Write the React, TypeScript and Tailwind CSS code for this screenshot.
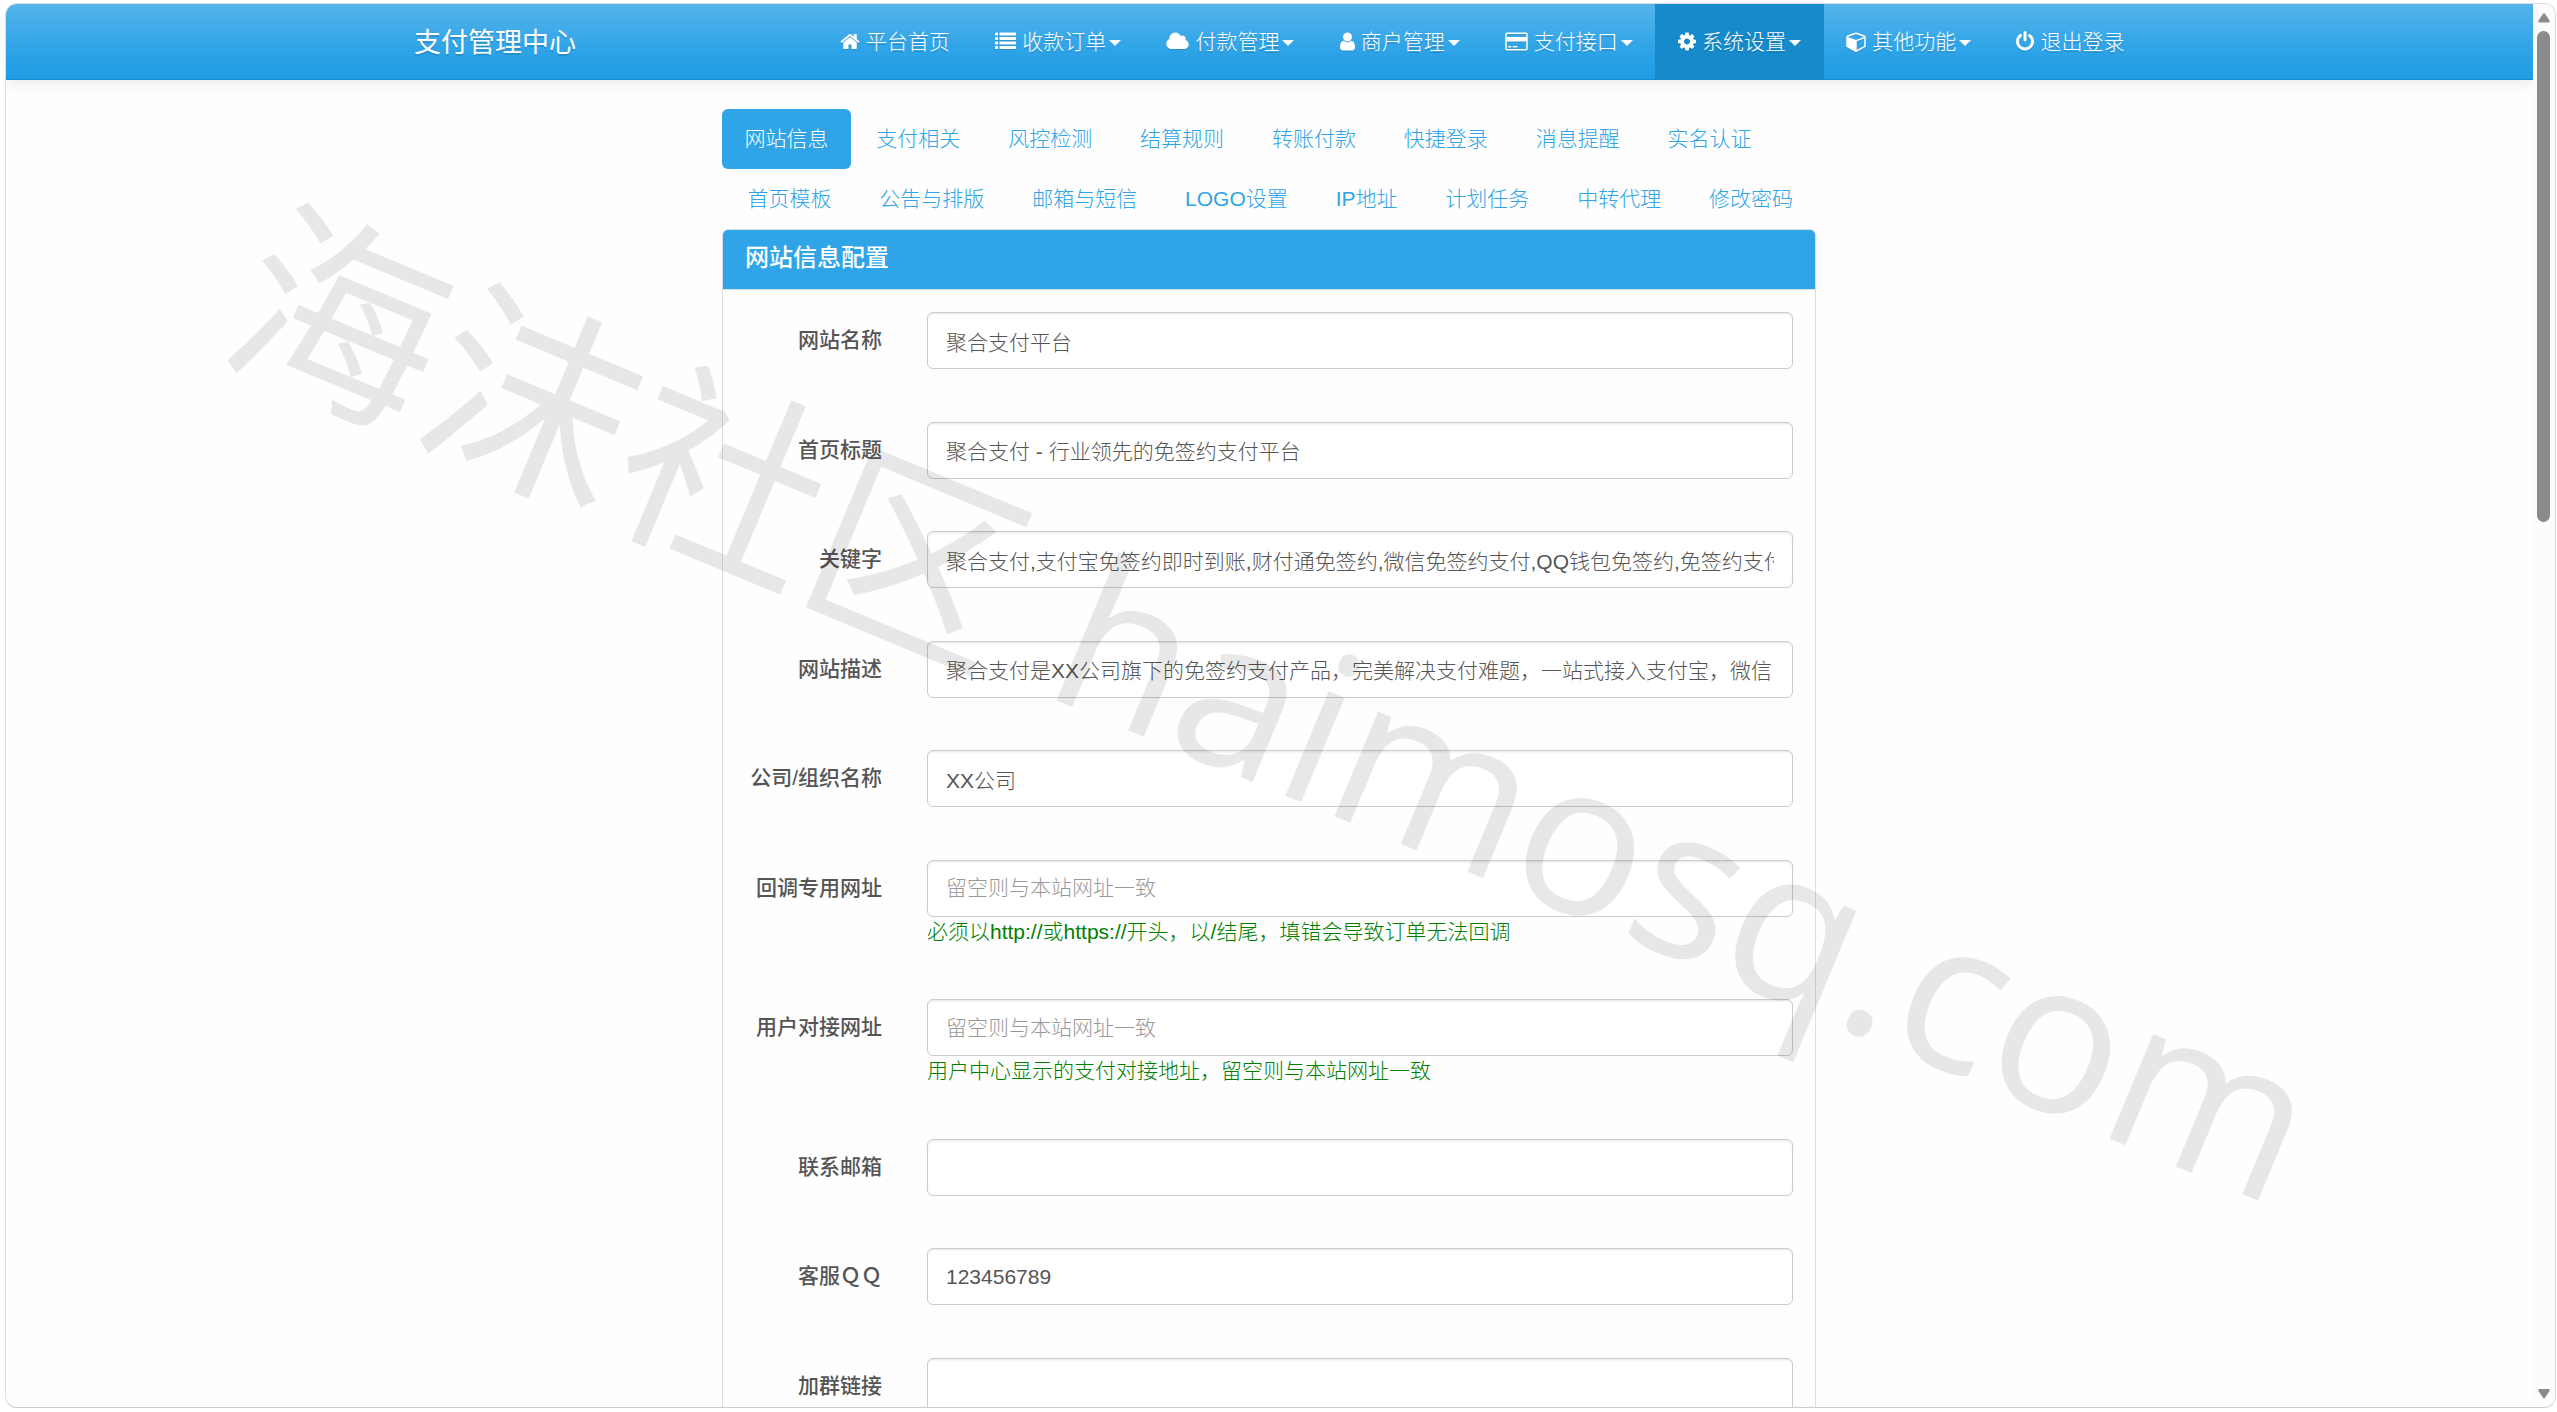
import React from 'react';

interface IconShape {
  viewBox: string;
  width: number;
  path: string;
}

interface NavItem {
  label: string;
  icon: IconShape;
  dropdown?: boolean;
  active?: boolean;
}

interface Field {
  label: string;
  value?: string;
  placeholder?: string;
  hint?: string;
}

const icons: { [key: string]: IconShape } = {
  home: {
    viewBox: '64 0 1664 1792',
    width: 20,
    path: 'M1472 992v480q0 26-19 45t-45 19h-384v-384h-256v384h-384q-26 0-45-19t-19-45v-480q0-1 .5-3t.5-3l575-474 575 474q1 2 1 6zm223-69l-62 74q-8 9-21 11h-3q-13 0-21-7l-692-577-692 577q-12 8-24 7-13-2-21-11l-62-74q-8-10-7-23.5t11-21.5l719-599q32-26 76-26t76 26l244 204v-195q0-14 9-23t23-9h192q14 0 23 9t9 23v408l219 182q10 8 11 21.5t-7 23.5z',
  },
  list: {
    viewBox: '0 0 1792 1792',
    width: 21,
    path: 'M0 1312q0-32 32-32h192q32 0 32 32v192q0 32-32 32h-192q-32 0-32-32zM0 928q0-32 32-32h192q32 0 32 32v192q0 32-32 32h-192q-32 0-32-32zM0 544q0-32 32-32h192q32 0 32 32v192q0 32-32 32h-192q-32 0-32-32zM0 160q0-32 32-32h192q32 0 32 32v192q0 32-32 32h-192q-32 0-32-32zM384 1312q0-32 32-32h1344q32 0 32 32v192q0 32-32 32h-1344q-32 0-32-32zM384 928q0-32 32-32h1344q32 0 32 32v192q0 32-32 32h-1344q-32 0-32-32zM384 544q0-32 32-32h1344q32 0 32 32v192q0 32-32 32h-1344q-32 0-32-32zM384 160q0-32 32-32h1344q32 0 32 32v192q0 32-32 32h-1344q-32 0-32-32z',
  },
  cloud: {
    viewBox: '64 0 1920 1792',
    width: 23,
    path: 'M1984 1152q0 159-112.5 271.5t-271.5 112.5h-1088q-185 0-316.5-131.5t-131.5-316.5q0-132 71-241.5t187-163.5q-2-28-2-43 0-212 150-362t362-150q158 0 286.5 88t187.5 230q70-62 166-62 106 0 181 75t75 181q0 75-41 138 129 30 213 134.5t84 239.5z',
  },
  user: {
    viewBox: '256 0 1280 1792',
    width: 15,
    path: 'M1536 1399q0 109-62.5 187t-150.5 78h-854q-88 0-150.5-78t-62.5-187q0-85 8.5-160.5t31.5-152 58.5-131 94-89 134.5-34.5q131 128 313 128t313-128q76 0 134.5 34.5t94 89 58.5 131 31.5 152 8.5 160.5zm-256-887q0 159-112.5 271.5t-271.5 112.5-271.5-112.5-112.5-271.5 112.5-271.5 271.5-112.5 271.5 112.5 112.5 271.5z',
  },
  card: {
    viewBox: '0 0 1920 1792',
    width: 23,
    path: 'M1760 128q66 0 113 47t47 113v1216q0 66-47 113t-113 47h-1600q-66 0-113-47t-47-113v-1216q0-66 47-113t113-47h1600zm-1600 128q-13 0-22.5 9.5t-9.5 22.5v224h1664v-224q0-13-9.5-22.5t-22.5-9.5h-1600zm1600 1280q13 0 22.5-9.5t9.5-22.5v-608h-1664v608q0 13 9.5 22.5t22.5 9.5h1600zm-1504-128v-128h256v128h-256zm384 0v-128h384v128h-384z',
  },
  cog: {
    viewBox: '128 0 1536 1792',
    width: 18,
    path: 'M1152 896q0-106-75-181t-181-75-181 75-75 181 75 181 181 75 181-75 75-181zm512-109v222q0 12-8 23t-20 13l-185 28q-19 54-39 91 35 50 107 138 10 12 10 25t-9 23q-27 37-99 108t-94 71q-12 0-26-9l-138-108q-44 23-91 38-16 136-29 186-7 28-36 28h-222q-14 0-24.5-8.5t-11.5-21.5l-28-184q-49-16-90-37l-141 107q-10 9-25 9-14 0-25-11-126-114-165-168-7-10-7-23 0-12 8-23 15-21 51-66.5t54-70.5q-27-50-41-99l-183-27q-13-2-21-12.5t-8-23.5v-222q0-12 8-23t19-13l186-28q14-46 39-92-40-57-107-138-10-12-10-24 0-10 9-23 26-36 98.5-107.5t94.5-71.5q13 0 26 10l138 107q44-23 91-38 16-136 29-186 7-28 36-28h222q14 0 24.5 8.5t11.5 21.5l28 184q49 16 90 37l142-107q9-9 24-9 13 0 25 10 129 119 165 170 7 8 7 22 0 12-8 23-15 21-51 66.5t-54 70.5q26 50 41 98l183 28q13 2 21 12.5t8 23.5z',
  },
  cube: {
    viewBox: '0 0 1664 1792',
    width: 20,
    path: 'M896 1629l640-349v-636l-640 233v752zm-64-865l698-254-698-254-698 254 698 254zm832-252v768q0 35-18 65t-49 47l-704 384q-28 16-61 16t-61-16l-704-384q-31-17-49-47t-18-65v-768q0-40 23-73t61-47l704-256q22-8 44-8t44 8l704 256q38 14 61 47t23 73z',
  },
  power: {
    viewBox: '128 0 1536 1792',
    width: 18,
    path: 'M1664 896q0 156-61 298t-164 245-245 164-298 61-298-61-245-164-164-245-61-298q0-182 80.5-343t226.5-270q43-32 95.5-25t83.5 50q32 42 24.5 94.5t-49.5 84.5q-98 74-151.5 181t-53.5 228q0 104 40.5 198.5t109.5 163.5 163.5 109.5 198.5 40.5 198.5-40.5 163.5-109.5 109.5-163.5 40.5-198.5q0-121-53.5-228t-151.5-181q-42-32-49.5-84.5t24.5-94.5q31-43 84-50t95 25q146 109 226.5 270t80.5 343zm-640-768v640q0 52-38 90t-90 38-90-38-38-90v-640q0-52 38-90t90-38 90 38 38 90z',
  },
};

const navItems: NavItem[] = [
  { label: '平台首页', icon: icons.home },
  { label: '收款订单', icon: icons.list, dropdown: true },
  { label: '付款管理', icon: icons.cloud, dropdown: true },
  { label: '商户管理', icon: icons.user, dropdown: true },
  { label: '支付接口', icon: icons.card, dropdown: true },
  { label: '系统设置', icon: icons.cog, dropdown: true, active: true },
  { label: '其他功能', icon: icons.cube, dropdown: true },
  { label: '退出登录', icon: icons.power },
];

const tabs = [
  '网站信息', '支付相关', '风控检测', '结算规则', '转账付款', '快捷登录', '消息提醒', '实名认证',
  '首页模板', '公告与排版', '邮箱与短信', 'LOGO设置', 'IP地址', '计划任务', '中转代理', '修改密码',
];

const fields: Field[] = [
  { label: '网站名称', value: '聚合支付平台' },
  { label: '首页标题', value: '聚合支付 - 行业领先的免签约支付平台' },
  { label: '关键字', value: '聚合支付,支付宝免签约即时到账,财付通免签约,微信免签约支付,QQ钱包免签约,免签约支付' },
  { label: '网站描述', value: '聚合支付是XX公司旗下的免签约支付产品，完美解决支付难题，一站式接入支付宝，微信' },
  { label: '公司/组织名称', value: 'XX公司' },
  { label: '回调专用网址', placeholder: '留空则与本站网址一致', hint: '必须以http://或https://开头，以/结尾，填错会导致订单无法回调' },
  { label: '用户对接网址', placeholder: '留空则与本站网址一致', hint: '用户中心显示的支付对接地址，留空则与本站网址一致' },
  { label: '联系邮箱' },
  { label: '客服ＱＱ', value: '123456789' },
  { label: '加群链接' },
];

const NavIcon: React.FC<{ icon: IconShape }> = ({ icon }) => (
  <svg
    viewBox={icon.viewBox}
    width={icon.width}
    height={21}
    fill="currentColor"
    className="mr-1.5 shrink-0 overflow-visible drop-shadow-[0_1.5px_0_rgba(0,0,0,0.12)]"
  >
    <path d={icon.path} />
  </svg>
);

const Navbar: React.FC = () => (
  <header className="h-[76px] border-b border-[#178acc] bg-[linear-gradient(#54b4eb,#2fa4e7_60%,#1d9ce5)] shadow-[0_1.5px_15px_rgba(0,0,0,0.1)]">
    <div className="mx-auto flex h-full w-[1755px] justify-between text-white [text-shadow:0_1.5px_0_rgba(0,0,0,0.12)]">
      <a className="flex h-full items-center pl-[22px] pt-[3px] text-[27px] font-normal">支付管理中心</a>
      <nav className="flex h-full">
        {navItems.map((item) => (
          <a
            key={item.label}
            className={`flex h-full items-center px-[22.6px] ${item.active ? 'bg-[#178acc]' : ''}`}
          >
            <NavIcon icon={item.icon} />
            <span className="leading-[30px]">{item.label}</span>
            {item.dropdown && (
              <span className="ml-[3px] mt-[3px] h-0 w-0 border-x-[6px] border-t-[6px] border-x-transparent border-t-white" />
            )}
          </a>
        ))}
      </nav>
    </div>
  </header>
);

const Tabs: React.FC = () => (
  <ul className="-mr-2 flex flex-wrap">
    {tabs.map((tab, index) => (
      <li key={tab} className={index > 0 ? 'ml-[3px]' : ''}>
        <a
          className={`block rounded-md px-[22.45px] py-[15px] leading-[30px] ${
            index === 0 ? 'bg-[#2fa4e7] text-white' : 'text-[#2fa4e7]'
          }`}
        >
          {tab}
        </a>
      </li>
    ))}
  </ul>
);

const FormRow: React.FC<{ field: Field }> = ({ field }) => (
  <div className="mb-[52.5px] flex">
    <label className="w-[159px] shrink-0 pt-[13px] text-right font-medium leading-[30px] text-[#555555]">{field.label}</label>
    <div className="ml-[45px] w-[866px]">
      <input
        type="text"
        defaultValue={field.value}
        placeholder={field.placeholder}
        className="block h-[57px] w-full rounded-md border border-[#cccccc] bg-white px-[18px] py-3 text-[#555555] shadow-[inset_0_1.5px_1.5px_rgba(0,0,0,0.075)] placeholder:text-[#999999]"
      />
      {field.hint && <p className="leading-[30px] text-[#008000]">{field.hint}</p>}
    </div>
  </div>
);

const Scrollbar: React.FC = () => (
  <div className="flex w-[22px] shrink-0 flex-col items-center bg-[#fcfcfc] pt-[9px] pb-2">
    <svg width="12" height="10" viewBox="0 0 12 10" fill="#8b8b8b">
      <path d="M5 .8Q6-.4 7 .8L11.6 7.5Q12.2 9.5 10.5 9.5H1.5Q-.2 9.5.4 7.5Z" />
    </svg>
    <div className="mt-2 mr-px h-[491px] w-[13px] rounded-full bg-[#8b8b8b]" />
    <svg width="12" height="10" viewBox="0 0 12 10" fill="#8b8b8b" className="mt-auto">
      <path d="M5 8.7Q6 9.9 7 8.7L11.6 2Q12.2 0 10.5 0H1.5Q-.2 0 .4 2Z" />
    </svg>
  </div>
);

const Watermark: React.FC = () => (
  <div className="pointer-events-none absolute left-[219px] top-[163px] rotate-[22.6deg] whitespace-pre text-[212px] font-normal leading-none text-black/9 [font-family:'Open_Sans','Noto_Sans_CJK_SC',sans-serif] [transform-origin:0_84%]">
    <span className="mr-1.5 text-[208px]">海沫社区</span> haimosq.com
  </div>
);

export default function App() {
  return (
    <div className="relative h-[1412px] w-[2557px] overflow-hidden bg-white pl-[5px] pt-[3px] text-[21px] font-light [font-family:'Liberation_Sans','Noto_Sans_CJK_SC',sans-serif]">
      <div className="flex h-[1405px] w-[2551px] overflow-hidden rounded-xl border border-[#dddddd] border-b-[#cccccc] bg-[#fefefe]">
        <div className="w-[2527px] shrink-0 overflow-hidden">
          <Navbar />
          <main className="ml-[716px] mt-[29px] w-[1094px]">
            <Tabs />
            <section className="rounded-md border border-[#dddddd]">
              <div className="h-[60px] rounded-t-[5px] border-b border-[#dddddd] bg-[#2fa4e7] px-[22px] pt-[11px]">
                <h3 className="text-[24px] font-medium leading-[34px] text-white">网站信息配置</h3>
              </div>
              <div className="pt-[22px]">
                {fields.map((field) => (
                  <FormRow key={field.label} field={field} />
                ))}
              </div>
            </section>
          </main>
        </div>
        <Scrollbar />
      </div>
      <Watermark />
    </div>
  );
}
